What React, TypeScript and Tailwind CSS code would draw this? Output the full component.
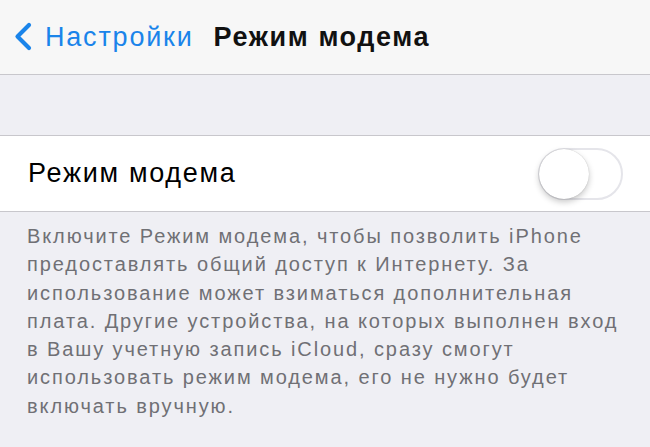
export default function App() {
  return (
    <div
      className="w-[650px] h-[447px] overflow-hidden bg-[#efeff4]"
      style={{ fontFamily: '"Liberation Sans", Arial, sans-serif' }}
    >
      {/* nav bar */}
      <div className="h-[75px] bg-[#f7f7f7] border-b border-[#c8c7cc] flex items-center">
        <svg width="20" height="32" viewBox="0 0 20 32" className="ml-[13px] shrink-0">
          <path d="M16 4 L4.5 15.5 L16 27" fill="none" stroke="#1a84ea" strokeWidth="4.2" strokeLinecap="round" strokeLinejoin="round" />
        </svg>
        <span className="ml-[12px] text-[27px] text-[#1a84ea] tracking-[1.8px]">Настройки</span>
        <span className="ml-[20px] text-[27px] font-bold text-[#111] tracking-[1.6px]">Режим модема</span>
      </div>

      <div className="h-[60px]" />

      {/* cell */}
      <div className="h-[77px] bg-white border-y border-[#c8c7cc] flex items-center justify-between pl-[28px] pr-[27px]">
        <span className="text-[27px] text-black tracking-[1.7px]">Режим модема</span>
        <div className="relative w-[85px] h-[52px] rounded-full border-2 border-[#e5e5ea] bg-white">
          <div className="absolute left-[-1px] top-[-1px] w-[50px] h-[50px] rounded-full bg-white shadow-[0_3px_6px_rgba(0,0,0,0.22),0_0_1px_rgba(0,0,0,0.25)]" />
        </div>
      </div>

      {/* footer */}
      <p className="pt-[10px] px-[27px] text-[20px] leading-[28.3px] text-[#707075] tracking-[1.9px] whitespace-nowrap">
        Включите Режим модема, чтобы позволить iPhone
        <br />
        предоставлять общий доступ к Интернету. За
        <br />
        использование может взиматься дополнительная
        <br />
        плата. Другие устройства, на которых выполнен вход
        <br />
        в Вашу учетную запись iCloud, сразу смогут
        <br />
        использовать режим модема, его не нужно будет
        <br />
        включать вручную.
      </p>
    </div>
  );
}
